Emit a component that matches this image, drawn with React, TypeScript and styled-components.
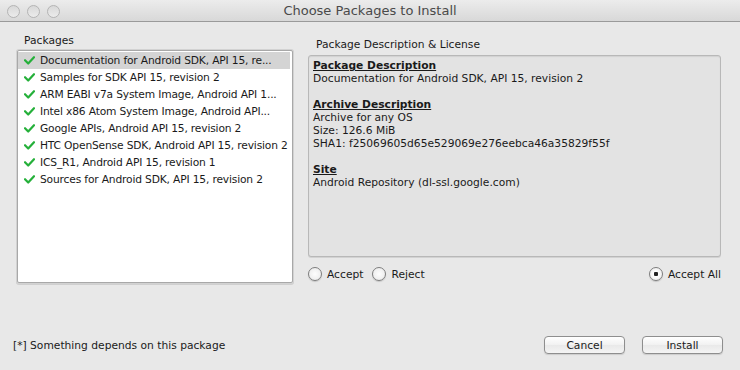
import React from 'react';
import styled, { createGlobalStyle } from 'styled-components';

const packages = [
  'Documentation for Android SDK, API 15, re...',
  'Samples for SDK API 15, revision 2',
  'ARM EABI v7a System Image, Android API 1...',
  'Intel x86 Atom System Image, Android API...',
  'Google APIs, Android API 15, revision 2',
  'HTC OpenSense SDK, Android API 15, revision 2',
  'ICS_R1, Android API 15, revision 1',
  'Sources for Android SDK, API 15, revision 2',
];

const Check = () => (
  <CheckIcon width="11" height="9" viewBox="0 0 11 9">
    <path d="M1 4.2 L4.2 7.5 L10 1.2" fill="none" stroke="#25b03a" strokeWidth="2.2" strokeLinecap="round" strokeLinejoin="round" />
  </CheckIcon>
);

export default function App() {
  return (
    <>
      <GlobalStyle />
      <Window>
        <TitleBar>
          <Lights>
            <Light />
            <Light />
            <Light />
          </Lights>
          <Title>Choose Packages to Install</Title>
        </TitleBar>
        <Main>
          <LeftColumn>
            <GroupLabel>Packages</GroupLabel>
            <ListBox>
              {packages.map((p, i) => (
                <Row key={p} selected={i === 0}>
                  <Check />
                  <span>{p}</span>
                </Row>
              ))}
            </ListBox>
          </LeftColumn>
          <RightColumn>
            <GroupLabel $indent>Package Description &amp; License</GroupLabel>
            <DescBox>
              <Heading>Package Description</Heading>
              <Line>Documentation for Android SDK, API 15, revision 2</Line>
              <Spacer />
              <Heading>Archive Description</Heading>
              <Line>Archive for any OS</Line>
              <Line>Size: 126.6 MiB</Line>
              <Line>SHA1: f25069605d65e529069e276eebca46a35829f55f</Line>
              <Spacer />
              <Heading>Site</Heading>
              <Line>Android Repository (dl-ssl.google.com)</Line>
            </DescBox>
            <RadioRow>
              <RadioItem>
                <Radio />
                Accept
              </RadioItem>
              <RadioItem>
                <Radio />
                Reject
              </RadioItem>
              <RadioItem $push>
                <Radio checked />
                Accept All
              </RadioItem>
            </RadioRow>
          </RightColumn>
        </Main>
        <Footer>
          <Note>[*] Something depends on this package</Note>
          <Buttons>
            <Button>Cancel</Button>
            <Button>Install</Button>
          </Buttons>
        </Footer>
      </Window>
    </>
  );
}

const GlobalStyle = createGlobalStyle`
  html, body {
    margin: 0;
    padding: 0;
    background: #e8e8e8;
  }
  body {
    font-family: "DejaVu Sans", "Liberation Sans", sans-serif;
    font-size: 10.7px;
    color: #1a1a1a;
  }
`;

const Window = styled.div`
  width: 740px;
  height: 370px;
  display: flex;
  flex-direction: column;
  background: #e8e8e8;
  overflow: hidden;
`;

const TitleBar = styled.div`
  position: relative;
  height: 21px;
  display: flex;
  align-items: center;
  justify-content: center;
  background: linear-gradient(#ececec, #d8d8d8);
  border-bottom: 1px solid #9a9a9a;
`;

const Lights = styled.div`
  position: absolute;
  left: 7px;
  top: 5px;
  display: flex;
  gap: 7px;
`;

const Light = styled.div`
  width: 11px;
  height: 11px;
  border-radius: 50%;
  border: 1px solid #b4b4b4;
  background: linear-gradient(#d8d8d8, #ececec);
`;

const Title = styled.div`
  font-size: 13px;
  color: #4a4a4a;
`;

const Main = styled.div`
  display: flex;
  gap: 15px;
  padding: 0 19px 0 15px;
`;

const LeftColumn = styled.div`
  width: 278px;
  display: flex;
  flex-direction: column;
  padding-top: 12px;
`;

const RightColumn = styled.div`
  flex: 1;
  display: flex;
  flex-direction: column;
  padding-top: 16px;
`;

const GroupLabel = styled.div<{ $indent?: boolean }>`
  height: 14px;
  line-height: 14px;
  margin: 0 0 ${(p) => (p.$indent ? '3px' : '2px')} ${(p) => (p.$indent ? '8px' : '9px')};
  color: #1a1a1a;
`;

const ListBox = styled.div`
  height: 229px;
  padding: 1px 2px 1px 0;
  background: #fff;
  border: 1px solid #a8a8a8;
  border-radius: 2px;
  box-shadow: 0 0 0 1px #d2d2d2, 0 1px 0 1px #cfcfcf;
  margin-left: 2px;
`;

const Row = styled.div<{ selected?: boolean }>`
  height: 17px;
  display: flex;
  align-items: center;
  gap: 5px;
  padding-left: 6px;
  white-space: nowrap;
  overflow: hidden;
  letter-spacing: -0.17px;
  background: ${(p) => (p.selected ? '#d4d4d4' : 'transparent')};
`;

const CheckIcon = styled.svg`
  flex-shrink: 0;
`;

const DescBox = styled.div`
  height: 194px;
  padding: 3px 4px;
  background: #e3e3e3;
  border: 1px solid #b8b8b8;
  border-radius: 3px;
  box-shadow: 0 1px 0 #d2d2d2, inset 0 1px 1px rgba(0, 0, 0, 0.08);
`;

const Heading = styled.div`
  font-weight: bold;
  text-decoration: underline;
  line-height: 13px;
`;

const Line = styled.div`
  line-height: 13px;
  white-space: nowrap;
`;

const Spacer = styled.div`
  height: 13px;
`;

const RadioRow = styled.div`
  display: flex;
  align-items: center;
  gap: 9px;
  height: 24px;
  margin-top: 5px;
`;

const RadioItem = styled.div<{ $push?: boolean }>`
  display: flex;
  align-items: center;
  gap: 5px;
  margin-left: ${(p) => (p.$push ? 'auto' : '0')};
`;

const Radio = styled.span<{ checked?: boolean }>`
  width: 12px;
  height: 12px;
  border-radius: 50%;
  border: 1px solid #7d7d7d;
  background: radial-gradient(circle, ${(p) => (p.checked ? '#222 0 2px, #fdfdfd 2.5px' : '#fdfdfd 0')}, #e8e8e8 100%);
  box-shadow: 0 1px 1px rgba(0, 0, 0, 0.15);
`;

const Footer = styled.div`
  margin-top: auto;
  height: 36px;
  display: flex;
  align-items: center;
  justify-content: space-between;
  padding: 0 17px 7px 13px;
`;

const Note = styled.div`
  color: #1a1a1a;
`;

const Buttons = styled.div`
  display: flex;
  gap: 17px;
`;

const Button = styled.button`
  width: 81px;
  height: 18px;
  padding: 0;
  font-family: inherit;
  font-size: 10.7px;
  color: #1a1a1a;
  border: 1px solid #8e8e8e;
  border-radius: 4px;
  background: linear-gradient(#ffffff, #f1f1f1 50%, #e9e9e9 51%, #f4f4f4);
  box-shadow: 0 1px 1px rgba(0, 0, 0, 0.12);
`;
